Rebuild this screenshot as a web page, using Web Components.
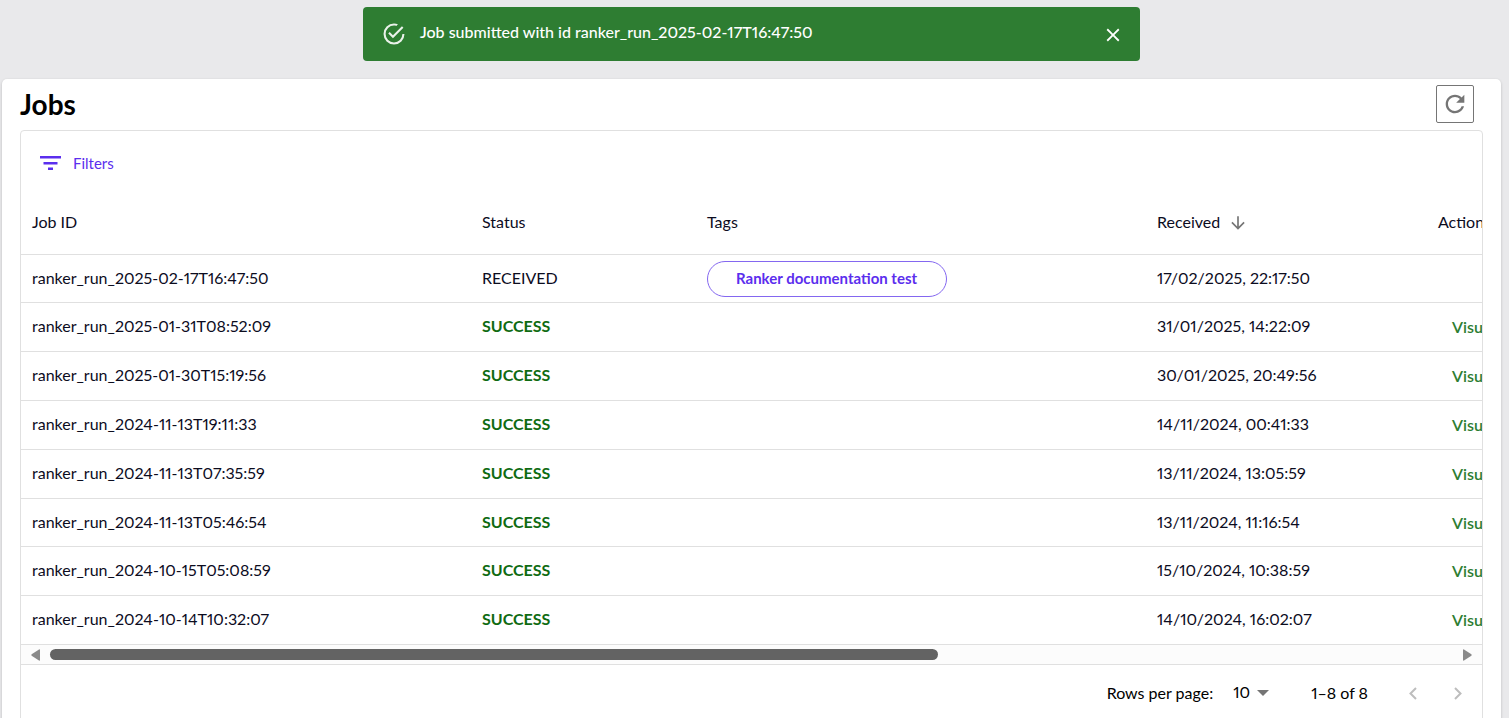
<!DOCTYPE html>
<html lang="en">
<head>
<meta charset="utf-8">
<meta name="viewport" content="width=device-width, initial-scale=1">
<title>Jobs</title>
<style>
  html { height: 100%; }
  body {
    margin: 0;
    min-height: 100%;
    background: #e9e9eb;
    color: #0c0c1e;
    font: 16px/24px Lato, "Open Sans", sans-serif;
    font-variant-numeric: proportional-nums;
    --line: #e0e0e0;
    --accent: #5b2eee;
    --success: #0f6b12;
    --action: #2e7d32;
    --icon: #757575;
  }
</style>
</head>
<body>
<jobs-page>
  <toast-message slot="toast">Job submitted with id ranker_run_2025-02-17T16:47:50</toast-message>
  <jobs-panel heading="Jobs">
    <jobs-grid></jobs-grid>
  </jobs-panel>
</jobs-page>

<script>
const define = (name, html, setup) => {
  const template = document.createElement('template');
  template.innerHTML = html;
  customElements.define(name, class extends HTMLElement {
    constructor() {
      super();
      this.attachShadow({ mode: 'open' }).append(template.content.cloneNode(true));
    }
    connectedCallback() {
      if (setup && !this.ready) setup(this, this.shadowRoot);
      this.ready = true;
    }
  });
};

define('jobs-page', `
  <style>
    :host { display: flex; flex-direction: column; box-sizing: border-box; height: 100vh; overflow: hidden; padding: 7px 8px 0 2px; gap: 18px; }
    slot[name=toast]::slotted(*) { align-self: center; }
  </style>
  <slot name="toast"></slot>
  <slot></slot>`);

define('toast-message', `
  <style>
    :host { display: flex; box-sizing: border-box; flex: none; align-items: center; width: 100%; max-width: 777px; min-height: 54px; padding: 0 16px 0 20px; gap: 15px; border-radius: 4px; background: #2e7d32; color: #fff; }
    svg { display: block; fill: currentColor; }
    p { flex: 1; margin: 0 0 4px; font-weight: 500; }
    button { padding: 2px 0 0; border: 0; background: none; color: inherit; cursor: pointer; }
  </style>
  <svg width="22" height="22" viewBox="1.500 1.500 21 21" opacity=".9" aria-hidden="true"><path d="M20 12a8 8 0 0 1-8 8 8 8 0 0 1-8-8 8 8 0 0 1 8-8c.76 0 1.5.11 2.2.31l1.57-1.57A9.822 9.822 0 0 0 12 2 10 10 0 0 0 2 12a10 10 0 0 0 10 10 10 10 0 0 0 10-10M7.91 10.08 6.5 11.5 11 16 21 6l-1.41-1.42L11 13.17z"/></svg>
  <p role="status"><slot></slot></p>
  <button type="button" aria-label="Close"><svg width="22" height="22" viewBox="0 0 24 24"><path d="M19 6.41 17.59 5 12 10.59 6.41 5 5 6.41 10.59 12 5 17.59 6.41 19 12 13.41 17.59 19 19 17.59 13.41 12z"/></svg></button>`,
  (host, root) => root.querySelector('button').addEventListener('click', () => host.remove()));

define('jobs-panel', `
  <style>
    :host { display: block; flex: 1; box-sizing: border-box; padding: 6px 18px 0 18px; background: #fff; border-radius: 5px 5px 0 0; box-shadow: 0 1px 3px rgba(0,0,0,.2); }
    header { display: flex; align-items: center; justify-content: space-between; padding-right: 9px; margin-bottom: 7px; }
    h1 { margin: 0; color: #000; font-size: 28px; line-height: 38px; font-weight: 700; }
    button { display: grid; place-items: center; box-sizing: border-box; width: 38px; height: 38px; padding: 0; border: 1px solid #757575; border-radius: 2px; background: none; color: var(--icon); cursor: pointer; }
  </style>
  <header>
    <h1></h1>
    <button type="button" aria-label="Refresh"><svg width="28" height="28" viewBox="0 0 24 24" fill="currentColor"><path d="M17.65 6.35C16.2 4.9 14.21 4 12 4c-4.42 0-7.99 3.58-7.99 8s3.57 8 7.99 8c3.73 0 6.84-2.55 7.73-6h-2.08c-.82 2.33-3.04 4-5.65 4-3.31 0-6-2.69-6-6s2.69-6 6-6c1.66 0 3.14.69 4.22 1.78L13 11h7V4z"/></svg></button>
  </header>
  <slot></slot>`,
  (host, root) => { root.querySelector('h1').textContent = host.getAttribute('heading'); });

define('job-tag', `
  <style>
    :host { display: inline-block; vertical-align: middle; }
    span { display: block; box-sizing: border-box; height: 36px; padding: 0 29px 0 28px; border: 1px solid #8467f0; border-radius: 18px; color: var(--accent); font-size: 15px; line-height: 32px; font-weight: 700; }
  </style>
  <span><slot></slot></span>`);

define('scroll-rail', `
  <style>
    :host { display: flex; align-items: center; box-sizing: border-box; height: 20px; padding: 0 10px; gap: 10px; background: #fcfcfc; border-bottom: 1px solid var(--line); }
    svg { display: block; flex: none; fill: #8a8a8a; }
    div { flex: 1; }
    i { display: block; width: calc(100% / 1.58); height: 11px; border-radius: 6px; background: #636363; }
  </style>
  <svg width="9" height="12" viewBox="0 0 9 12"><path d="M9 1v10q0 1-1 .6L.6 6.8Q0 6 .6 5.2L8 .4Q9 0 9 1z"/></svg>
  <div><i></i></div>
  <svg width="9" height="12" viewBox="0 0 9 12"><path d="M0 1v10q0 1 1 .6l7.400-4.800Q9 6 8.400 5.200L1 .4Q0 0 0 1z"/></svg>`);

define('grid-pager', `
  <style>
    :host { display: flex; align-items: center; justify-content: flex-end; height: 56px; padding-right: 14px; color: #000; }
    label { margin-right: 20px; }
    .pick { display: flex; align-items: center; margin-right: 42px; }
    select { appearance: none; width: 24px; padding: 0; margin: 0 0 2px; border: 0; background: none; color: inherit; font: inherit; font-variant-numeric: inherit; }
    svg { display: block; }
    .pick svg { pointer-events: none; }
    button { display: grid; place-items: center; width: 21px; height: 24px; padding: 0; border: 0; background: none; color: #bdbdbd; }
    output { margin-right: 34px; }
    .next { margin-left: 24px; }
  </style>
  <label for="size">Rows per page:</label>
  <div class="pick">
    <select id="size"><option>10</option><option>25</option><option>50</option></select>
    <svg width="12" height="6" viewBox="0 0 12 6" fill="#757575"><path d="M0 0h12L6 6z"/></svg>
  </div>
  <output>1–8 of 8</output>
  <button type="button" disabled aria-label="Previous page"><svg width="8" height="13" viewBox="0 0 8 13" fill="none" stroke="currentColor" stroke-width="2"><path d="M7 1 1.500 6.500 7 12"/></svg></button>
  <button class="next" type="button" disabled aria-label="Next page"><svg width="8" height="13" viewBox="0 0 8 13" fill="none" stroke="currentColor" stroke-width="2"><path d="M1 1l5.500 5.500L1 12"/></svg></button>`);

const jobs = [
  ['ranker_run_2025-02-17T16:47:50', 'RECEIVED', '17/02/2025, 22:17:50', 'Ranker documentation test'],
  ['ranker_run_2025-01-31T08:52:09', 'SUCCESS', '31/01/2025, 14:22:09'],
  ['ranker_run_2025-01-30T15:19:56', 'SUCCESS', '30/01/2025, 20:49:56'],
  ['ranker_run_2024-11-13T19:11:33', 'SUCCESS', '14/11/2024, 00:41:33'],
  ['ranker_run_2024-11-13T07:35:59', 'SUCCESS', '13/11/2024, 13:05:59'],
  ['ranker_run_2024-11-13T05:46:54', 'SUCCESS', '13/11/2024, 11:16:54'],
  ['ranker_run_2024-10-15T05:08:59', 'SUCCESS', '15/10/2024, 10:38:59'],
  ['ranker_run_2024-10-14T10:32:07', 'SUCCESS', '14/10/2024, 16:02:07'],
];

define('jobs-grid', `
  <style>
    :host { display: block; border: 1px solid var(--line); border-radius: 4px 4px 0 0; }
    button { border: 0; background: none; font: inherit; cursor: pointer; }
    .filters { display: flex; align-items: center; gap: 12px; height: 60px; padding: 4px 18px 0; color: var(--accent); font-size: 15px; }
    .viewport { overflow: hidden; }
    table { width: 158%; min-width: 1700px; table-layout: fixed; border-collapse: separate; border-spacing: 0; }
    .id, .tags { width: 450px; }
    .status { width: 225px; }
    .received { width: 281px; }
    th, td { box-sizing: border-box; height: 49px; padding: 0 0 2px 11px; border-bottom: 1px solid var(--line); text-align: left; font-weight: 400; white-space: nowrap; }
    th { height: 64px; }
    th svg { vertical-align: middle; margin-left: 4px; fill: var(--icon); }
    tbody tr:nth-child(5n+1) td { height: 48px; }
    tbody td:nth-child(3) { padding-bottom: 0; }
    .ok { color: var(--success); font-weight: 700; }
    td button { padding: 2px 14px 0; color: var(--action); font-weight: 600; }
  </style>
  <button class="filters" type="button"><svg width="22" height="14" viewBox="0 0 22 14" fill="currentColor" aria-hidden="true"><path d="M1 0h21v2.400H1zM4.500 6h14v2.400h-14zM9 11.600h5V14H9z"/></svg>Filters</button>
  <div class="viewport">
    <table>
      <colgroup><col class="id"><col class="status"><col class="tags"><col class="received"><col></colgroup>
      <thead><tr><th scope="col">Job ID</th><th scope="col">Status</th><th scope="col">Tags</th><th scope="col">Received <svg width="20" height="20" viewBox="0 0 24 24" aria-hidden="true"><path d="m20 12-1.410-1.410L13 16.170V4h-2v12.170l-5.580-5.590L4 12l8 8z"/></svg></th><th scope="col">Actions</th></tr></thead>
      <tbody></tbody>
    </table>
  </div>
  <scroll-rail></scroll-rail>
  <grid-pager></grid-pager>`,
  (host, root) => {
    root.querySelector('tbody').innerHTML = jobs.map(([id, status, received, tag]) => `
      <tr><td>${id}</td>
      <td>${status === 'SUCCESS' ? `<span class="ok">${status}</span>` : status}</td>
      <td>${tag ? `<job-tag>${tag}</job-tag>` : ''}</td>
      <td>${received}</td>
      <td>${status === 'SUCCESS' ? '<button type="button">Visualize</button>' : ''}</td></tr>`).join('');
  });
</script>
</body>
</html>
